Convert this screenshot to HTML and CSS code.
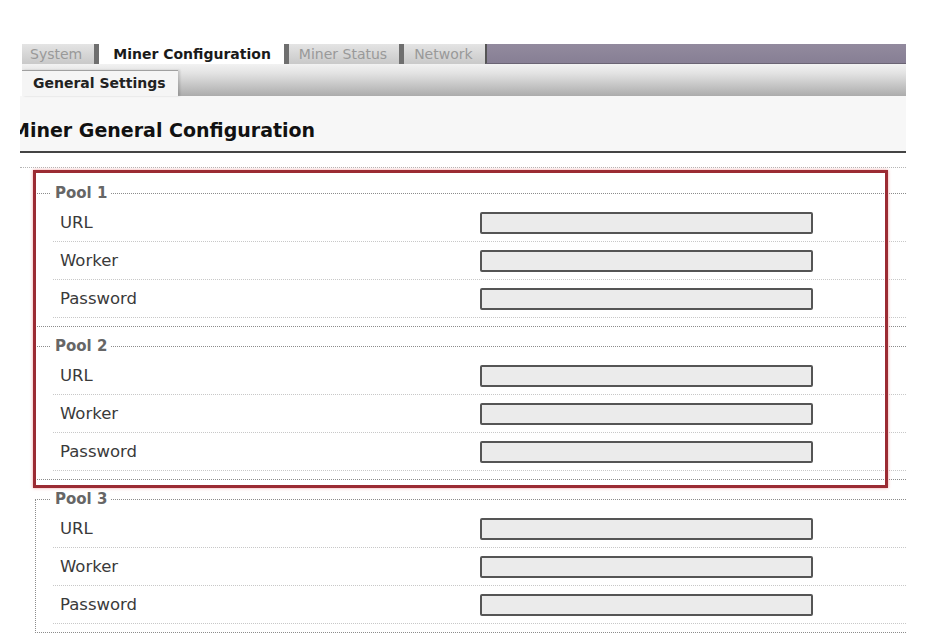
FILE: index.html
```html
<!DOCTYPE html>
<html>
<head>
	<title>Miner Configuration</title>
	<meta charset="utf-8">
	<link rel="stylesheet" href="styles.css">
</head>
<body>
  <div class="page">
    <div class="tabs">
      <div class="tab first">System</div>
      <div class="tab active">Miner Configuration</div>
      <div class="tab">Miner Status</div>
      <div class="tab">Network</div>
      <div class="tab-fill"></div>
    </div>

    <div class="subbar">
      <div class="subtab">General Settings</div>
    </div>

    <div class="heading">
      <h1>Miner General Configuration</h1>
    </div>

    <form class="pools" onsubmit="return false;">
      <fieldset>
        <legend>Pool 1</legend>
        <div class="row"><label>URL</label><input type="text"></div>
        <div class="row"><label>Worker</label><input type="text"></div>
        <div class="row"><label>Password</label><input type="text"></div>
      </fieldset>

      <fieldset>
        <legend>Pool 2</legend>
        <div class="row"><label>URL</label><input type="text"></div>
        <div class="row"><label>Worker</label><input type="text"></div>
        <div class="row"><label>Password</label><input type="text"></div>
      </fieldset>

      <fieldset>
        <legend>Pool 3</legend>
        <div class="row"><label>URL</label><input type="text"></div>
        <div class="row"><label>Worker</label><input type="text"></div>
        <div class="row"><label>Password</label><input type="text"></div>
      </fieldset>

      <!-- marca roja sobre los pools 1 y 2 -->
      <div class="highlight"></div>
    </form>
  </div>
</body>
</html>
```

FILE: styles.css
```css
body {
	margin: 0;
	background-color: #fff;
	font-family: "DejaVu Sans", Verdana, sans-serif;
	color: #333;
}
.page {
	margin: 44px 0 0 20px;
	width: 886px;
	overflow: hidden;
}

/* pestañas principales */
.tabs {
	display: flex;
	height: 20px;
	margin-left: 2px;
	font-size: 14px;
	line-height: 20px;
}
.tab {
	padding: 0 12px 0 10px;
	background: linear-gradient(#e4e4e4, #c9c9c9);
	color: #999;
	border-left: 5px solid #6f6f6f;
	white-space: nowrap;
}
.tab.first {
	border-left: none;
	padding-left: 8px;
}
.tab.active {
	background: #fff;
	color: #1a1a1a;
	font-weight: bold;
	padding: 0 13px 0 14px;
}
.tab-fill {
	flex: 1;
	background: linear-gradient(#928a9e, #877f94);
	border-left: 2px solid #555;
	border-bottom: 1px solid #6a6474;
	box-sizing: border-box;
}

/* sub pestañas */
.subbar {
	display: flex;
	height: 32px;
	margin-left: 2px;
	padding-top: 6px;
	box-sizing: border-box;
	background: linear-gradient(#f2f2f2, #e2e2e2 30%, #acacac);
}
.subtab {
	padding: 0 12px 0 11px;
	background-color: #f5f5f5;
	border-top: 1px solid #a0a0a0;
	box-shadow: 2px 0 2px rgba(0, 0, 0, 0.15);
	font-size: 14px;
	font-weight: bold;
	line-height: 25px;
	color: #222;
}

/* titulo */
.heading {
	height: 57px;
	padding-top: 23px;
	box-sizing: border-box;
	background-color: #f7f7f7;
	border-bottom: 2px solid #444;
}
.heading h1 {
	margin: 0 0 0 -9px;
	font-size: 19px;
	line-height: 22px;
	color: #111;
}

/* pools */
.pools {
	position: relative;
	margin: 14px 0 0 0;
	padding-top: 16px;
	border-top: 1px dotted #b5b5b5;
}
fieldset {
	margin: 0 0 10px 15px;
	padding: 2px 0 8px 0;
	border: 1px dotted #8c8c8c;
	border-right: none;
	min-inline-size: 0;
}
legend {
	margin-left: 15px;
	padding: 0 4px;
	font-size: 15px;
	font-weight: bold;
	line-height: 18px;
	color: #666;
}
.row {
	display: flex;
	align-items: center;
	height: 38px;
	margin-left: 17px;
	padding-left: 7px;
	box-sizing: border-box;
	border-bottom: 1px dotted #c8c8c8;
}
.row label {
	width: 420px;
	font-size: 16.5px;
	color: #3a3a3a;
}
.row input[type=text] {
	width: 333px;
	height: 22px;
	box-sizing: border-box;
	border: 2px solid #555;
	border-radius: 2px;
	background-color: #ebebeb;
	margin: 0;
}
.highlight {
	position: absolute;
	top: 2px;
	left: 13px;
	width: 855px;
	height: 318px;
	box-sizing: border-box;
	border: 3px solid #9b2b33;
	box-shadow: 0 0 3px rgba(230, 90, 90, 0.6);
	pointer-events: none;
}
```
